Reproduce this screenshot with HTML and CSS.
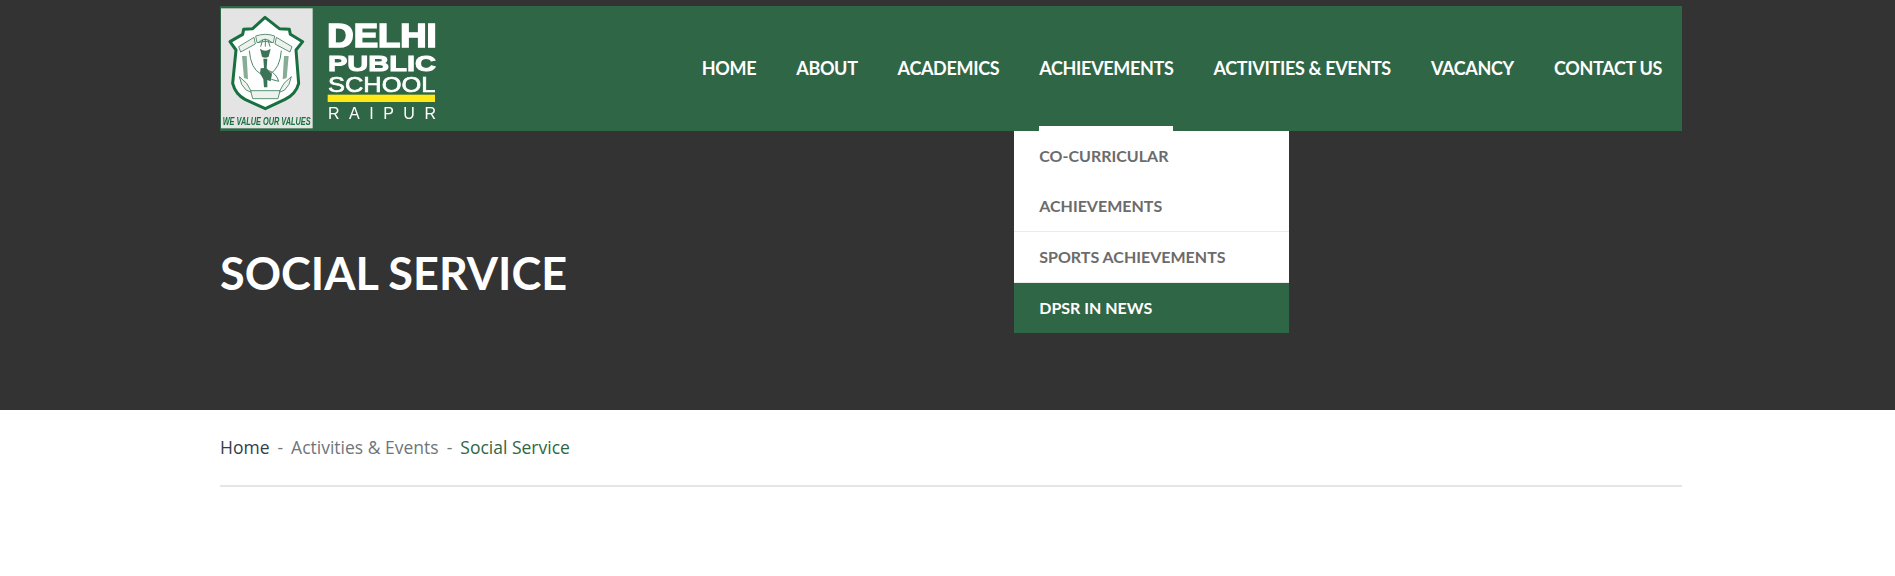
FILE: index.html
```html
<!DOCTYPE html>
<html lang="en">
<head>
<meta charset="utf-8">
<title>Social Service - Delhi Public School Raipur</title>
<link rel="stylesheet" href="styles.css">
</head>
<body>
<section class="hero">
  <div class="wrap">
    <header class="topbar">
      <a class="logo" href="#" aria-label="Delhi Public School Raipur">
        <svg class="logo-svg" viewBox="30 18 660 375" width="220" height="125" xmlns="http://www.w3.org/2000/svg">
          <defs><filter id="soft"><feGaussianBlur stdDeviation="1.1"/></filter></defs>
          <g filter="url(#soft)">
            <rect class="l-panel" x="33" y="25" width="275" height="360"/>
            <path class="l-shield" d="M165 52 L208 86 L238 88 L241 103 L278 125 L258 150 L266 250 Q258 282 225 298 L166 326 L105 298 Q76 282 68 250 L78 150 L60 125 L98 103 L101 88 L128 86 Z"/>
            <path class="l-band" d="M86 140 L132 112 L136 132 L92 156 Z M137 108 Q166 98 194 108 L190 128 Q166 120 141 128 Z M199 112 L246 140 L240 156 L195 132 Z"/>
            <path class="l-thin" d="M118 152 Q122 205 152 222 M214 152 Q210 205 180 222"/>
            <path class="l-leaf" d="M96 168 L110 168 L114 238 L102 234 Z M236 168 L222 168 L218 238 L230 234 Z"/>
            <path class="l-band" d="M88 230 L110 250 L126 278 L108 270 Q92 256 88 230 Z M244 230 L222 250 L206 278 L224 270 Q240 256 244 230 Z"/>
            <path class="l-band" d="M122 272 L210 272 L204 296 L128 296 Z"/>
            <path class="l-dark" d="M150 146 Q165 158 182 146 L176 170 Q165 176 156 170 Z"/>
            <path class="l-thin" d="M145 128 Q165 108 186 128 M152 140 L158 120 M166 140 L166 116 M180 140 L174 120"/>
            <path class="l-dark" d="M160 176 L172 176 L170 205 L186 222 L182 244 L172 240 L172 262 L162 262 L160 238 L150 220 L152 205 L162 204 Z"/>
            <path class="l-thin" d="M178 212 Q200 222 206 244 L184 238"/>
            <text class="l-motto" x="170" y="375" text-anchor="middle" textLength="264" lengthAdjust="spacingAndGlyphs">WE VALUE OUR VALUES</text>
            <text class="l-delhi" x="352" y="140" textLength="328" lengthAdjust="spacingAndGlyphs">DELHI</text>
            <text class="l-public" x="354" y="214" textLength="324" lengthAdjust="spacingAndGlyphs">PUBLIC</text>
            <text class="l-school" x="354" y="275" textLength="322" lengthAdjust="spacingAndGlyphs">SCHOOL</text>
            <rect class="l-bar" x="353" y="284" width="322" height="22"/>
            <text class="l-raipur" x="354" y="356" textLength="324">RAIPUR</text>
          </g>
        </svg>
      </a>
      <nav class="main-nav">
        <ul class="nav-list">
          <li class="nav-item"><a href="#">HOME</a></li>
          <li class="nav-item"><a href="#">ABOUT</a></li>
          <li class="nav-item"><a href="#">ACADEMICS</a></li>
          <li class="nav-item is-open">
            <a href="#">ACHIEVEMENTS</a>
            <ul class="dropdown">
              <li><a href="#">CO-CURRICULAR ACHIEVEMENTS</a></li>
              <li><a href="#">SPORTS ACHIEVEMENTS</a></li>
              <li class="is-active"><a href="#">DPSR IN NEWS</a></li>
            </ul>
          </li>
          <li class="nav-item"><a href="#">ACTIVITIES &amp; EVENTS</a></li>
          <li class="nav-item"><a href="#">VACANCY</a></li>
          <li class="nav-item"><a href="#">CONTACT US</a></li>
        </ul>
      </nav>
    </header>
    <h1 class="page-title">SOCIAL SERVICE</h1>
  </div>
</section>
<main class="wrap">
  <div class="breadcrumb">
    <a class="crumb-home" href="#">Home</a>
    <span class="sep">-</span>
    <a class="crumb-mid" href="#">Activities &amp; Events</a>
    <span class="sep">-</span>
    <span class="crumb-current">Social Service</span>
  </div>
</main>
</body>
</html>
```
FILE: styles.css
```css
* { box-sizing: border-box; }
html, body { margin: 0; padding: 0; }
body { background: #fff; font-family: "Open Sans", sans-serif; min-height: 576px; overflow: hidden; }
a { color: inherit; text-decoration: none; }
ul { list-style: none; margin: 0; padding: 0; }

.wrap { width: 1462px; margin-left: 220px; }

.hero { background: #333333; height: 410px; padding-top: 6px; }

.topbar { display: flex; justify-content: space-between; align-items: center; height: 125px; background: #2f6645; padding-right: 20px; }
.logo { display: block; height: 125px; }
.logo-svg { display: block; }
.main-nav { margin-bottom: 1px; }

.l-panel { fill: #e4e4e4; }
.l-shield { fill: #fff; stroke: #17703f; stroke-width: 9; stroke-linejoin: round; }
.l-thin { fill: none; stroke: #4b8a68; stroke-width: 3; }
.l-band { fill: #eef2ee; stroke: #3f7d5b; stroke-width: 2.5; }
.l-leaf { fill: #86ad96; }
.l-dark { fill: #3d7356; }
.l-motto { fill: #17703f; font: italic 700 32px "Liberation Sans", sans-serif; }
.l-delhi { fill: #fff; font: 700 98px "Liberation Sans", sans-serif; stroke: #fff; stroke-width: 5; }
.l-public { fill: #fff; font: 700 68px "Liberation Sans", sans-serif; stroke: #fff; stroke-width: 3; }
.l-school { fill: #fff; font: 400 64px "Liberation Sans", sans-serif; stroke: #fff; stroke-width: 2; }
.l-bar { fill: #ffe812; }
.l-raipur { fill: #fff; font: 400 48px "Liberation Sans", sans-serif; }

.nav-list { display: flex; gap: 40px; }
.nav-item { position: relative; font: 700 18px/24px Lato, sans-serif; color: #fff; letter-spacing: -0.34px; }
.nav-item > a { display: block; }

.is-open::after { content: ""; position: absolute; left: 0; right: 0; top: 70px; height: 5px; background: #fff; }

.dropdown { position: absolute; left: -25px; top: 75px; width: 275px; background: #fff; z-index: 2; letter-spacing: 0; }
.dropdown li { border-bottom: 1px solid #ececec; }
.dropdown a { display: block; padding: 0 25px; font: 700 16px/50px Lato, sans-serif; color: #6b6b6b; }
.dropdown .is-active { background: #2f6645; border-bottom: 0; }
.dropdown .is-active a { color: #fff; }

.page-title { margin: 112px 0 0; font: 700 45px/60px Lato, sans-serif; color: #fff; }

.breadcrumb { display: flex; gap: 8px; height: 77px; padding-top: 25px; border-bottom: 2px solid #e5e5e5; font-size: 17.5px; line-height: 25px; color: #6f6f6f; }
.crumb-home { color: #333d4a; }
.crumb-mid { color: #70757a; }
.crumb-current { color: #2f6645; }
.sep { color: #777; }
```
